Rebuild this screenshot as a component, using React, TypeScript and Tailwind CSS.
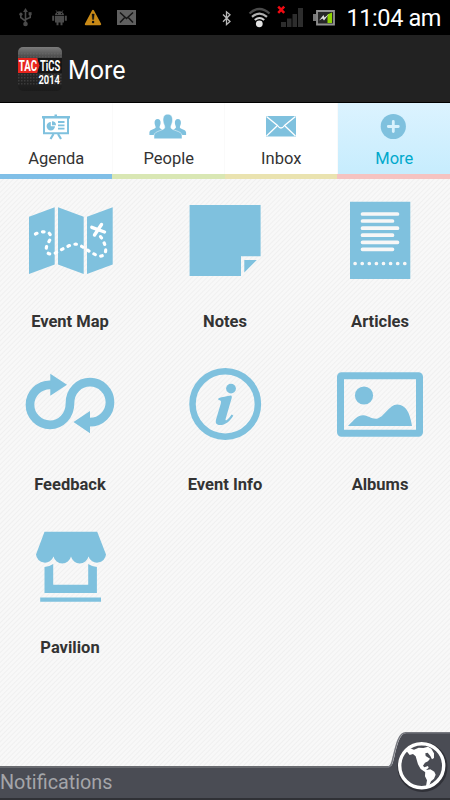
import type { ReactNode } from "react";

const BLUE = "#7fc1de";

function StatusBar() {
  return (
    <div className="flex h-[35px] items-center bg-black pr-[9px] pl-[19px] text-white">
      <svg className="h-[35px] w-[13px]" viewBox="0 0 13 35" fill="none" stroke="#4b4b4b" strokeWidth="1.6">
        <path d="M6.5 10v14M1.8 14v3.5l4.7 3.6M11.2 13.5v4l-4.7 2" />
        <path d="M6.5 8l2.4 4H4.1z" fill="#4b4b4b" stroke="none" />
        <circle cx="1.9" cy="14.2" r="1.6" fill="#4b4b4b" stroke="none" />
        <path d="M9.6 12.2h3v3h-3z" fill="#4b4b4b" stroke="none" />
        <circle cx="6.5" cy="24" r="2.3" fill="#4b4b4b" stroke="none" />
      </svg>
      <svg className="ml-5 h-[35px] w-[15px]" viewBox="0 0 15 35" fill="#4b4b4b">
        <path d="M3 15.3a4.5 4 0 0 1 9 0zM3 16h9v6.5H3zM.2 15.8h2v5H.2zM12.8 15.8h2v5h-2zM4.5 22h2v3.2h-2zM8.500 22h2v3.2h-2z" />
        <path d="M4 10.3l1.5 2.3M11 10.3l-1.5 2.3" stroke="#4b4b4b" strokeWidth=".8" />
        <circle cx="5.5" cy="13.6" r=".6" fill="#000" />
        <circle cx="9.5" cy="13.6" r=".6" fill="#000" />
      </svg>
      <svg className="ml-[17px] h-[35px] w-[18px]" viewBox="0 0 18 35">
        <path d="M9 10.8l7.2 13.4H1.8z" fill="#c98a17" stroke="#c98a17" strokeWidth="2" strokeLinejoin="round" />
        <path d="M8 14h2.2l-.5 5.4H8.5z" fill="#111" stroke="#111" strokeWidth=".4" />
        <circle cx="9.1" cy="22" r="1.2" fill="#111" />
      </svg>
      <svg className="ml-[15px] h-[35px] w-[19px]" viewBox="0 0 19 35">
        <path d="M0 10h19v15H0z" fill="#606060" />
        <path d="M3 12.5l6.5 6 6.5-6M3 22.5l4.5-4.8M16 22.5l-4.5-4.8" fill="none" stroke="#151515" strokeWidth="1.5" />
      </svg>
      <svg className="ml-[86px] h-[35px] w-[10px]" viewBox="0 0 10 35" fill="none" stroke="#b9b9b9" strokeWidth="1.3">
        <path d="M1 14.5l7 7-3.5 3V11.8l3.5 3-7 7" />
      </svg>
      <svg className="ml-[16px] h-[35px] w-[23px]" viewBox="0 0 23 35" fill="none">
        <path d="M1.5 13.5q10-9 20 0" stroke="#4a4a4a" strokeWidth="2.3" />
        <path d="M4 16.8q7.5-6.5 15 0" stroke="#b0b0b0" strokeWidth="2.2" />
        <path d="M6.8 20q4.7-4 9.4 0" stroke="#d0d0d0" strokeWidth="2" />
        <circle cx="11.3" cy="23.8" r="3.4" fill="#e3e3e3" />
      </svg>
      <svg className="ml-[6px] h-[35px] w-[27px]" viewBox="0 0 27 35">
        <path d="M4 22h5v5H4zM10 18.5h4.5V27H10zM15.5 14h4.5v13h-4.5zM21 8h5v19h-5z" fill="#2d2d2d" />
        <path d="M1.2 6.7l6 6.2M7.2 6.7l-6 6.2" stroke="#f00a12" strokeWidth="2.5" />
      </svg>
      <svg className="ml-[9px] h-[35px] w-[22px]" viewBox="0 0 22 35">
        <path d="M0 14h3v7H0z" fill="#777" />
        <path d="M4 11h17v13.5H4z" fill="#262626" stroke="#929292" strokeWidth="1.8" />
        <path d="M14.5 14.5l4.500-2V23h-4.500z" fill="#8fd400" />
        <path d="M6 20.500l4.500-5.500 1 2.500 4.500-3.500-5 6.500-1.500-2z" fill="#ddd" />
      </svg>
      <span className="ml-auto pt-[2px] text-[23.5px] leading-none tracking-[-0.4px] whitespace-nowrap">11:04 am</span>
    </div>
  );
}

function Logo() {
  return (
    <svg className="h-11 w-11" viewBox="0 0 44 44">
      <defs>
        <linearGradient id="gloss" x1="0" y1="0" x2="0" y2="1">
          <stop offset="0" stopColor="#7c7c7c" />
          <stop offset=".24" stopColor="#484848" />
          <stop offset=".3" stopColor="#303030" />
          <stop offset="1" stopColor="#1b1b1b" />
        </linearGradient>
        <pattern id="mesh" width="3" height="3" patternUnits="userSpaceOnUse">
          <path d="M0 0h1.5v1.5H0z" fill="#777" opacity=".3" />
        </pattern>
      </defs>
      <rect width="44" height="44" rx="5" fill="url(#gloss)" />
      <path d="M0 5h44v34H0z" fill="url(#mesh)" />
      <path d="M20 11h24v15H20z" fill="#161616" />
      <path d="M0 11h19l2.5 7.5L19 26H0z" fill="#e7251e" />
      <g fill="#fff" fontFamily="Roboto, sans-serif" fontWeight="700">
        <text transform="translate(.8 24) scale(.65 1)" fontSize="15">TAC</text>
        <text transform="translate(22 24) scale(.63 1)" fontSize="15">TiCS</text>
        <text transform="translate(20.5 37) scale(.78 1)" fontSize="12">2014</text>
      </g>
    </svg>
  );
}

const tabs = [
  {
    label: "Agenda",
    bar: "bg-[#80bfe7]",
    icon: (
      <>
        <path d="M1 3h28v2.6H1zM13.5 1.5H16v2h-2.500z" />
        <path d="M3 5v15.200h24V5" fill="none" stroke={BLUE} strokeWidth="2" />
        <path d="M12.500 21l-3 5M17 21l3 5" stroke={BLUE} strokeWidth="2.200" />
        <path d="M9.800 9v4.200H14A4.200 4.200 0 1 1 9.800 9zM11 8.200a4 4 0 0 1 4 4h-4z" />
        <path d="M17 9h6.500M17 12.300h6.500M17 15.600h6.500" stroke={BLUE} strokeWidth="1.800" />
      </>
    ),
  },
  {
    label: "People",
    bar: "bg-[#d9e7b4]",
    icon: (
      <>
        <path d="M4.600 6c2.200 0 3.200 1.700 3 4.200-.2 2-1 2.800-1.100 4 .2 1.800 3.500 2 3.500 4V22H-3.600v-2.500c0-3.500 6-3 6.300-5.300-.1-1.200-.9-2-1.100-4C1.400 7.700 2.400 6 4.600 6z" />
        <path d="M24.900 6c2.200 0 3.200 1.700 3 4.200-.2 2-1 2.800-1.100 4 .3 2.300 6.300 1.800 6.300 5.300V22H19.500v-3.800c0-2 3.300-2.200 3.500-4-.1-1.200-.9-2-1.100-4C21.700 7.700 22.700 6 24.900 6z" />
        <path
          d="M14.800 1.200c3.600 0 5 2.700 4.700 6.700-.3 3-1.600 4.200-1.700 6.300 0 3.600 11.200 3.300 11.200 8.300v3.300H1v-3.300c0-5 10.800-4.700 10.800-8.300-.1-2.100-1.400-3.300-1.700-6.300-.3-4 1.100-6.700 4.700-6.700z"
          stroke="#fff"
          strokeWidth=".5"
        />
      </>
    ),
  },
  {
    label: "Inbox",
    bar: "bg-[#eae3b0]",
    icon: (
      <>
        <path d="M0 3h30v20.5H0z" />
        <path d="M.5 3.5l11 9q3.500 5 7 0l11-9M.5 23l10.500-10M29.500 23L19 13" fill="none" stroke="#fff" strokeWidth="1.300" />
      </>
    ),
  },
  {
    label: "More",
    bar: "bg-[#f5c3c1]",
    active: true,
    icon: (
      <>
        <circle cx="14.300" cy="13.500" r="12.600" />
        <path d="M14.300 8.500v10M9.300 13.500h10" stroke="#d9f2fd" strokeWidth="2.800" strokeLinecap="round" />
      </>
    ),
  },
];

function Tabs() {
  return (
    <nav className="grid h-[76px] shrink-0 grid-cols-4">
      {tabs.map((tab) => (
        <div
          key={tab.label}
          className={
            tab.active
              ? "flex flex-col items-center bg-gradient-to-b from-[#dcf3ff] to-[#c5ecfd] text-[#00a9cc]"
              : "flex flex-col items-center border-r border-[#fafafa] bg-white text-[#333]"
          }
        >
          <svg className="mt-[10px] h-[27px] w-[30px] overflow-visible" viewBox="0 0 30 27" fill={BLUE}>
            {tab.icon}
          </svg>
          <span className="mt-[9px] pl-px text-[16.5px] leading-[20px]">{tab.label}</span>
          <div className={`mt-auto h-[5px] w-[calc(100%+1px)] ${tab.bar}`} />
        </div>
      ))}
    </nav>
  );
}

const items: { label: string; art: ReactNode }[] = [
  {
    label: "Event Map",
    art: (
      <>
        <path d="M19 26.7l25.7-9.500v57.300L19 84zM48 17.200l25.700 9.500V84L48 74.500zM77 26.700l25.700-9.500v57.300L77 84z" />
        <g fill="none" stroke="#fff" strokeLinecap="round">
          <path
            d="M25.500 44C32 41 40 40.500 40.500 46C41 51 36.500 53 36.300 58.500C36.300 64 40 65 45 63.200C52 59.500 60 54 66 54.200C73 55 80 64 90 66.200C97 66 98 57 90.500 46.500"
            strokeWidth="3.200"
            strokeDasharray="1.600 5.600"
          />
          <path d="M81.800 37.300L94.500 42M91.500 34.500L84.500 45" strokeWidth="3.400" />
        </g>
      </>
    ),
  },
  {
    label: "Notes",
    art: <path d="M24.600 15h71v51.300H76V86H24.600zM79.300 70h12.500L79.300 82.500z" />,
  },
  {
    label: "Articles",
    art: (
      <>
        <path d="M30 11.700h60.300V89H30z" />
        <path
          d="M42.500 24h35M42.500 31h30M42.500 38.200h35M42.500 45.200h30M42.500 52.300h35M42.500 59.300h30M35.100 73.500h0M42.200 73.500h0M49.300 73.500h0M56.400 73.500h0M63.500 73.500h0M70.600 73.500h0M77.700 73.500h0M84.800 73.500h0"
          stroke="#f7f7f7"
          strokeWidth="3.700"
          strokeLinecap="round"
        />
      </>
    ),
  },
  {
    label: "Feedback",
    art: (
      <>
        <path
          d="M42 31.800H40A20 20 0 0 0 40 71.800C51 71.800 60 63 60 50C60 38 69 29.200 80 29.200A20 20 0 0 1 80 69.200"
          fill="none"
          stroke={BLUE}
          strokeWidth="8.700"
        />
        <path d="M40.300 20.800L57 31.800 40.300 42.700zM80 58L63.500 69 80 80.300z" />
      </>
    ),
  },
  {
    label: "Event Info",
    art: (
      <>
        <circle cx="60.200" cy="51" r="32.700" fill="none" stroke={BLUE} strokeWidth="6.500" />
        <circle cx="66" cy="35.600" r="4.900" />
        <path d="M53.500 45.200c4-1.200 8-2 12.500-2.700.8.300 1 1.400.7 2.500L60.600 66c-.3 1.300.3 1.700 1.300 1 1.900-1.300 3.300-3.200 4.700-5.400l1.700.8C65.500 68 60 72 55 72c-4 0-4.800-2.300-3.800-6l4.600-15.500c.7-2.400.1-3.200-2.500-3.400z" />
      </>
    ),
  },
  {
    label: "Albums",
    art: (
      <>
        <rect x="20.500" y="22.700" width="79" height="57.500" rx="1" fill="none" stroke={BLUE} strokeWidth="7" />
        <circle cx="44" cy="42.500" r="9.100" />
        <path d="M28 73C35 66 38 62 43.500 62.300C48 62.500 51 66 56.500 65.800C64 65 69 51.500 77.500 51.600C86 52 90 60 92 73z" />
      </>
    ),
  },
  {
    label: "Pavilion",
    art: (
      <>
        <path d="M34.500 15.800h52.700L96 38.500A9 9 0 0 1 78.500 40.500A9 9 0 0 1 61 40.500A9 9 0 0 1 43.500 40.500A9 9 0 0 1 26 38.500z" />
        <path d="M34.500 51q5.200-.5 8.700-3v20.700h35V48q3.500 2.500 8.700 3v26H34.500zM30.200 81.500H91v4.200H30.200z" />
      </>
    ),
  },
];

function Footer() {
  return (
    <footer className="relative mt-auto flex h-[34px] shrink-0 items-center border-t-2 border-b-2 border-t-[#696b70] border-b-[#303136] bg-[#4a4c54]">
      <span className="text-[19.8px] leading-none text-[#a4a5a9]">Notifications</span>
      <svg className="absolute right-0 -bottom-[2px] h-[70px] w-[62px]" viewBox="388 730 62 70">
        <path d="M388 767.5c5-1 5-6 6.500-11 2.500-10 5-23.500 12-23.500H450v65h-62z" fill="#4a4c54" />
        <path d="M388 767c4-.5 4-6 5.500-11 2.500-10 5-23.200 12-23.200H450" fill="none" stroke="#777980" strokeWidth="1.500" />
        <circle cx="422.500" cy="767" r="22.500" fill="none" stroke="#303138" strokeWidth="5" />
        <circle cx="421.700" cy="765.700" r="22" fill="#4a4c54" stroke="#fff" strokeWidth="3.400" />
        <g fill="#fff" transform="translate(330 720) scale(.3333)">
          <path d="M230 94l10-9 12 4 14-6 14 1 14-4 10 6 8 14v14l-6 4-5-10-8-10-7 2 1 8 13 8-6 8-9 4-6 9 4 5 11-4 2 5-7 6 8 8 1 5-14-7-12-8-8-14-4-14-3-10-8-7-10 3z" />
          <path d="M286 151l15-3 12 7 4 9-5 12-9 8-5 12-10 3 3-18-6-12z" />
        </g>
      </svg>
    </footer>
  );
}

export default function App() {
  return (
    <div className="flex h-[800px] w-[450px] flex-col overflow-hidden bg-[#f5f5f5] font-[Roboto,sans-serif]">
      <StatusBar />
      <header className="flex h-[68px] shrink-0 items-center border-b border-black bg-[#222] pl-[18px]">
        <Logo />
        <h1 className="ml-[6px] pt-[3px] text-[25px] leading-none text-white">More</h1>
      </header>
      <Tabs />
      <main className="grid flex-1 auto-rows-[163px] grid-cols-[repeat(3,120px)] content-start justify-between bg-[repeating-linear-gradient(135deg,#f8f8f8_0px,#f8f8f8_1.5px,#f0f0f0_2.5px,#f8f8f8_3.5px)] px-[10px] pt-[11px]">
        {items.map((item) => (
          <div key={item.label} className="flex flex-col items-center">
            <svg className="h-[100px] w-[120px]" viewBox="0 0 120 100" fill={BLUE}>
              {item.art}
            </svg>
            <span className="mt-[22px] text-[16.5px] leading-[20px] font-bold whitespace-nowrap text-[#333]">{item.label}</span>
          </div>
        ))}
      </main>
      <Footer />
    </div>
  );
}
